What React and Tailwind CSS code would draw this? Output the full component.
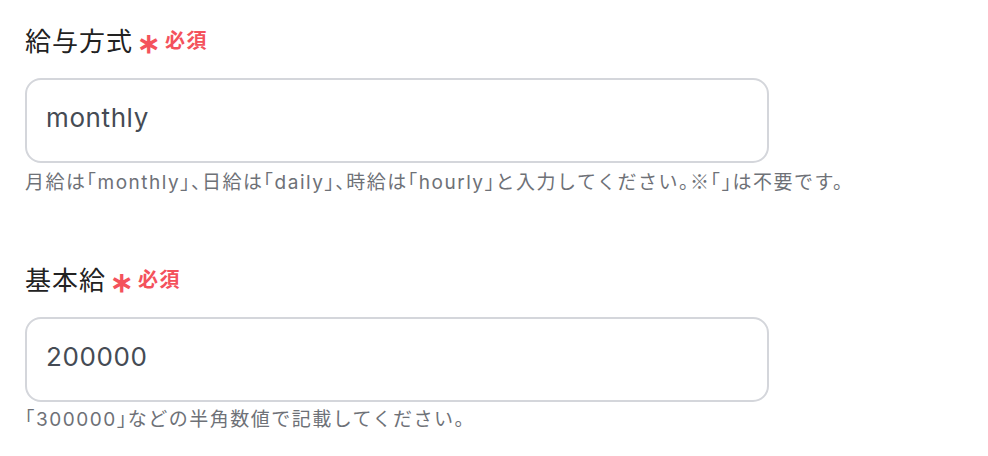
export default function App() {
  const font = { fontFamily: 'Inter, "Noto Sans CJK JP", sans-serif' };
  const Field = ({ label, value, help }) => (
    <div className="flex flex-col">
      <div className="flex items-center h-[40px]">
        <span className="text-[26px] text-[#222] tracking-[1px]">{label}</span>
        <span className="ml-[4px] text-[28px] leading-none text-[#f4525c] font-semibold mt-[4px]">∗</span>
        <span className="ml-[5px] text-[20px] font-bold text-[#f4525c] tracking-[1.5px]">必須</span>
      </div>
      <div className="mt-[17px] w-[744px] h-[85px] rounded-[16px] border-2 border-[#d4d6db] bg-white flex items-center px-[19px] pb-[6px]">
        <span className="text-[26px] text-[#454b54] tracking-[0.6px]">{value}</span>
      </div>
      <div className="mt-[4px] text-[19px] leading-[28px] text-[#6e7177] tracking-[1.5px] [font-feature-settings:'halt']">{help}</div>
    </div>
  );
  return (
    <div className="w-[988px] h-[456px] bg-white pl-[25px] pt-[21px]" style={font}>
      <Field
        label="給与方式"
        value="monthly"
        help={
          <>
            月給は「monthly」、日給は「daily」、時給は「hourly」と入力してください。
            <span className="font-['Noto_Sans_CJK_JP']">※</span>「」は不要です。
          </>
        }
      />
      <div className="h-[63px]" />
      <Field label="基本給" value="200000" help="「300000」などの半角数値で記載してください。" />
    </div>
  );
}
